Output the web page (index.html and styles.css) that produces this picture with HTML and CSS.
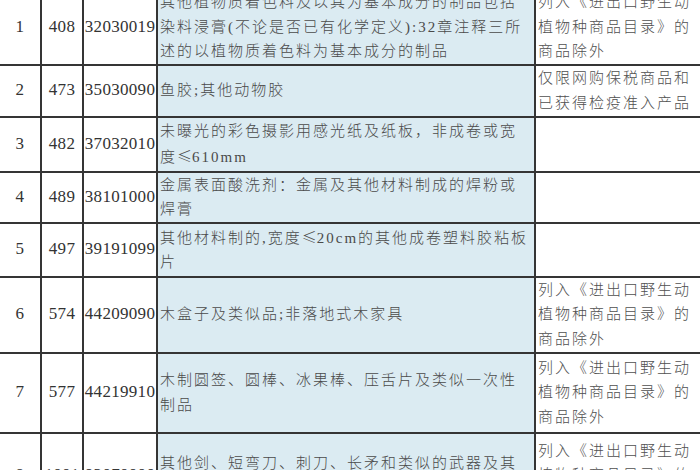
FILE: index.html
```html
<!DOCTYPE html>
<html lang="zh-CN">
<head>
<meta charset="utf-8">
<title>商品目录</title>
<link rel="stylesheet" href="styles.css">
</head>
<body>
<table class="list">
  <colgroup>
    <col class="c-no"><col class="c-seq"><col class="c-code"><col class="c-name"><col class="c-note">
  </colgroup>
  <tbody>
    <tr>
      <td class="num">1</td><td class="num">408</td><td class="code">32030019</td>
      <td class="name">其他植物质着色料及以其为基本成分的制品包括<br>染料浸膏(不论是否已有化学定义):32章注释三所<br>述的以植物质着色料为基本成分的制品</td>
      <td class="note">列入《进出口野生动<br>植物种商品目录》的<br>商品除外</td>
    </tr>
    <tr>
      <td class="num">2</td><td class="num">473</td><td class="code">35030090</td>
      <td class="name">鱼胶;其他动物胶</td>
      <td class="note">仅限网购保税商品和<br>已获得检疫准入产品</td>
    </tr>
    <tr>
      <td class="num">3</td><td class="num">482</td><td class="code">37032010</td>
      <td class="name">未曝光的彩色摄影用感光纸及纸板，非成卷或宽<br>度<span class="sym">≤</span>610mm</td>
      <td class="note"></td>
    </tr>
    <tr>
      <td class="num">4</td><td class="num">489</td><td class="code">38101000</td>
      <td class="name">金属表面酸洗剂：金属及其他材料制成的焊粉或<br>焊膏</td>
      <td class="note"></td>
    </tr>
    <tr>
      <td class="num">5</td><td class="num">497</td><td class="code">39191099</td>
      <td class="name">其他材料制的,宽度<span class="sym">≤</span>20cm的其他成卷塑料胶粘板<br>片</td>
      <td class="note"></td>
    </tr>
    <tr>
      <td class="num">6</td><td class="num">574</td><td class="code">44209090</td>
      <td class="name">木盒子及类似品;非落地式木家具</td>
      <td class="note">列入《进出口野生动<br>植物种商品目录》的<br>商品除外</td>
    </tr>
    <tr>
      <td class="num">7</td><td class="num">577</td><td class="code">44219910</td>
      <td class="name">木制圆签、圆棒、冰果棒、压舌片及类似一次性<br>制品</td>
      <td class="note">列入《进出口野生动<br>植物种商品目录》的<br>商品除外</td>
    </tr>
    <tr>
      <td class="num">8</td><td class="num">1001</td><td class="code">93070000</td>
      <td class="name">其他剑、短弯刀、刺刀、长矛和类似的武器及其<br>零件</td>
      <td class="note">列入《进出口野生动<br>植物种商品目录》的<br>商品除外</td>
    </tr>
  </tbody>
</table>
</body>
</html>
```
FILE: styles.css
```css
html, body {
  margin: 0;
  padding: 0;
  background: #ffffff;
  overflow: hidden;
}

.list {
  border-collapse: collapse;
  table-layout: fixed;
  width: 780px;
  margin-top: -12px;
  font-family: "Liberation Serif", "Noto Sans CJK SC", serif;
  color: #3a3a3a;
}

.c-no { width: 41px; }
.c-seq { width: 42px; }
.c-code { width: 74px; }
.c-name { width: 378px; }
.c-note { width: 245px; }

.list td {
  border: 2px solid #353535;
  padding: 0 1px 0 2px;
  vertical-align: middle;
  white-space: nowrap;
  overflow: hidden;
  font-size: 15px;
  font-weight: 300;
  line-height: 24.5px;
  letter-spacing: 2px;
  background: #ffffff;
}

.list tr td:first-child {
  border-left: none;
}

.list td.num,
.list td.code {
  text-align: center;
  font-size: 17px;
  font-weight: 400;
  letter-spacing: 0.3px;
  padding: 0;
  color: #333333;
}

.list td.name {
  background: #dbebf2;
  color: #4a4a4a;
}

.list td.note {
  color: #505050;
}

.sym {
  font-family: "Noto Sans CJK SC", sans-serif;
  letter-spacing: 0;
}

.list tr:nth-child(1) { height: 75px; }
.list tr:nth-child(2) { height: 52px; }
.list tr:nth-child(3) { height: 55px; }
.list tr:nth-child(4) { height: 51px; }
.list tr:nth-child(5) { height: 54px; }
.list tr:nth-child(6) { height: 76px; }
.list tr:nth-child(7) { height: 80px; }
.list tr:nth-child(8) { height: 86px; }
```
